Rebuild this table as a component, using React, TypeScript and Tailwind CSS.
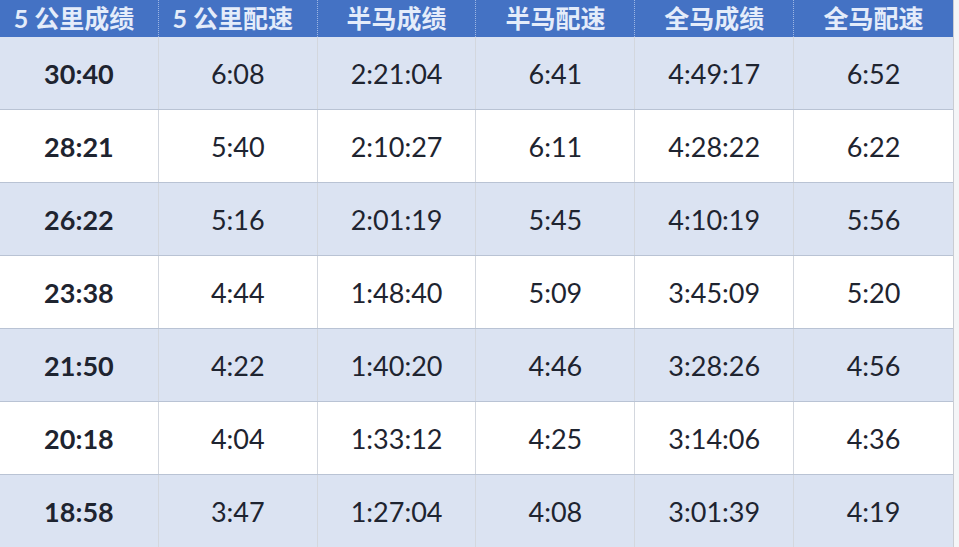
const headers = ['5 公里成绩', '5 公里配速', '半马成绩', '半马配速', '全马成绩', '全马配速'];

const rows = [
  ['30:40', '6:08', '2:21:04', '6:41', '4:49:17', '6:52'],
  ['28:21', '5:40', '2:10:27', '6:11', '4:28:22', '6:22'],
  ['26:22', '5:16', '2:01:19', '5:45', '4:10:19', '5:56'],
  ['23:38', '4:44', '1:48:40', '5:09', '3:45:09', '5:20'],
  ['21:50', '4:22', '1:40:20', '4:46', '3:28:26', '4:56'],
  ['20:18', '4:04', '1:33:12', '4:25', '3:14:06', '4:36'],
  ['18:58', '3:47', '1:27:04', '4:08', '3:01:39', '4:19'],
];

export default function App() {
  return (
    <div className="w-[959px] h-[547px] overflow-hidden bg-[#f4f5f7] font-['Lato','Noto_Sans_CJK_SC',sans-serif]">
      <div className="w-[954px] border-r border-[#c9ccd3]">
        <div className="grid grid-cols-6 h-[37px] bg-[#4472c4]">
          {headers.map((h, i) => (
            <div
              key={h}
              className={`flex items-center justify-center text-[25px] leading-none font-bold text-[#e4ecfa] ${
                i < 5 ? 'border-r border-dotted border-[#9db6e4]' : ''
              } ${i < 2 ? 'pr-[10px]' : ''}`}
            >
              {h}
            </div>
          ))}
        </div>
        {rows.map((r, ri) => (
          <div
            key={ri}
            className={`grid grid-cols-6 h-[73px] border-b border-[#b9c3d4] ${
              ri % 2 === 0 ? 'bg-[#dbe3f2]' : 'bg-white'
            }`}
          >
            {r.map((c, ci) => (
              <div
                key={ci}
                className={`flex items-center justify-center pt-[3px] text-[27px] text-[#1e2430] ${
                  ci === 0 ? 'font-bold' : ''
                } ${ci < 5 ? 'border-r border-[#d3d7de]' : ''}`}
              >
                {c}
              </div>
            ))}
          </div>
        ))}
      </div>
    </div>
  );
}
